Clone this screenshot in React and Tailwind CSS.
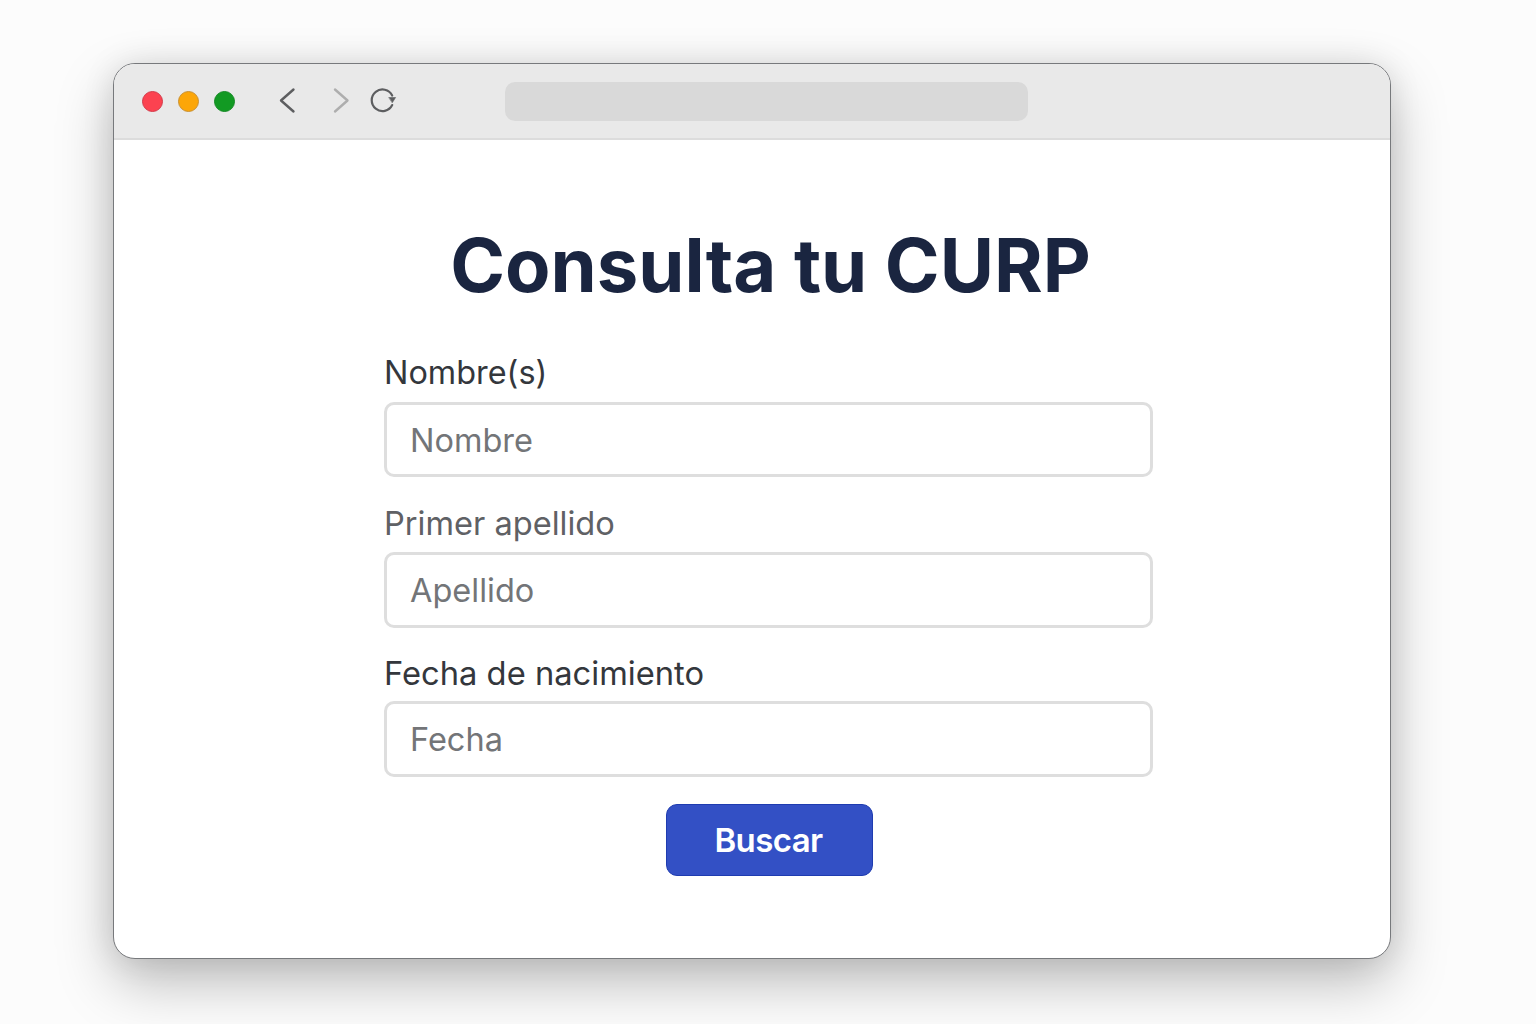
import React from "react";

const fields = [
  { label: "Nombre(s)", placeholder: "Nombre", color: "text-[#34373c]", mt: "mt-[42px]", h: "h-[75px] pt-[2px]", lh: "leading-[37px] text-[32.4px]" },
  { label: "Primer apellido", placeholder: "Apellido", color: "text-[#5f6165]", mt: "mt-[27px]", h: "h-[76px]", lh: "leading-[38px] text-[32.6px]" },
  { label: "Fecha de nacimiento", placeholder: "Fecha", color: "text-[#34373c]", mt: "mt-[25px]", h: "h-[76px]", lh: "leading-[40px] text-[32.7px]" },
];

function Field({ label, placeholder, color, mt, h, lh }) {
  return (
    <div className={mt}>
      <label className={`block h-[48px] ${lh} ${color}`}>{label}</label>
      <input
        type="text"
        placeholder={placeholder}
        className={`block w-full ${h} px-[23px] bg-white border-[3px] border-[#dedede] rounded-[10px] text-[32.5px] outline-none placeholder:text-[#737578]`}
      />
    </div>
  );
}

export default function App() {
  return (
    <div className="w-[1536px] h-[1024px] overflow-hidden bg-[#fcfcfc] pt-[63px] pl-[113px] font-['Inter',sans-serif]">
      <div className="w-[1278px] h-[896px] bg-white border border-[#77797c] rounded-[22px] overflow-hidden shadow-[0_24px_56px_rgba(0,0,0,0.25),0_0_32px_rgba(0,0,0,0.1)]">
        <div className="flex items-center h-[76px] bg-[#e9e9e9] border-b-2 border-[#dcdcdc] pl-[28px]">
          <div className="flex gap-[15px]">
            <span className="w-[21px] h-[21px] rounded-full bg-[#fc4250] border border-[#d43a4a]" />
            <span className="w-[21px] h-[21px] rounded-full bg-[#fca608] border border-[#c99032]" />
            <span className="w-[21px] h-[21px] rounded-full bg-[#129a23] border border-[#148a24]" />
          </div>
          <div className="flex items-center ml-[43px]">
            <svg width="20" height="30" viewBox="0 0 20 30" fill="none" stroke="#5d5e60" strokeWidth="2.4" strokeLinecap="round" strokeLinejoin="round">
              <path d="M15.5 3.5 3 14.5 15.5 25.5" />
            </svg>
            <svg className="ml-[33px]" width="20" height="30" viewBox="0 0 20 30" fill="none" stroke="#aeaeae" strokeWidth="2.4" strokeLinecap="round" strokeLinejoin="round">
              <path d="M4 3.5 16.5 14.5 4 25.5" />
            </svg>
            <svg className="ml-[18px]" width="28" height="28" viewBox="0 0 28 28" fill="none" stroke="#5d5e60" strokeWidth="2.2" strokeLinecap="round" strokeLinejoin="round">
              <path d="M23.2 18.1A10.8 10.8 0 1 1 23.2 8.5" />
              <path d="M20.1 10.5h6.5l-3.2 5z" fill="#5d5e60" strokeWidth="0.6" />
            </svg>
          </div>
          <div className="ml-[108px] w-[523px] h-[39px] rounded-[10px] bg-[#d9d9d9]" />
        </div>
        <div className="pl-[270px] w-[1039px]">
          <h1 className="mt-[79px] h-[93px] text-center text-[74.2px] leading-[92px] font-bold text-[#1a2540] translate-x-[2px]">
            Consulta tu CURP
          </h1>
          {fields.map((f) => (
            <Field key={f.label} {...f} />
          ))}
          <button className="block ml-[282px] mt-[27px] w-[207px] h-[72px] pt-[2px] pr-[2px] rounded-[11px] bg-[#3350c5] border border-[#1f3cb0] text-white text-[33px] font-semibold tracking-[-0.6px]">
            Buscar
          </button>
        </div>
      </div>
    </div>
  );
}
